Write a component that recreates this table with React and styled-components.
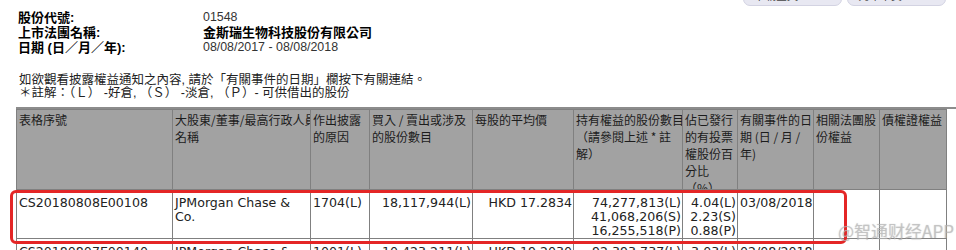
import React from "react";
import styled, { createGlobalStyle } from "styled-components";

const GlobalStyle = createGlobalStyle`
  html, body {
    margin: 0;
    padding: 0;
    background: #ffffff;
    overflow: hidden;
  }
`;

// page and top area

const Page = styled.div`
  position: relative;
  width: 956px;
  height: 250px;
  overflow: hidden;
  padding: 0 10px 0 16px;
  box-sizing: border-box;
`;

const Toolbar = styled.div`
  display: flex;
  justify-content: flex-end;
  align-items: flex-end;
  gap: 5px;
  height: 6px;
`;

const ToolButton = styled.div`
  flex: none;
  display: flex;
  align-items: flex-end;
  justify-content: space-between;
  width: 99px;
  height: 20px;
  box-sizing: border-box;
  padding: 0 12px 4px 10px;
  border: 1px solid #d3d3e2;
  border-radius: 7px;
  background: #e8e8f2;
  font-family: "Noto Sans CJK TC", sans-serif;
  font-size: 11px;
  color: #444;
  line-height: 11px;
`;

const Info = styled.div`
  display: grid;
  grid-template-columns: 185px 1fr;
  margin: 4px 0 0 2px;
  line-height: 15px;
  font-size: 13px;
`;

const Label = styled.div`
  font-family: "Liberation Sans", "Noto Sans CJK TC", sans-serif;
  font-weight: bold;
  color: #000;
`;

const Value = styled.div`
  font-family: "Liberation Sans", "Noto Sans CJK TC", sans-serif;
  font-weight: ${(p) => (p.$bold ? "bold" : "normal")};
  font-size: ${(p) => (p.$bold ? "13px" : "12.4px")};
  color: ${(p) => (p.$bold ? "#000" : "#333")};
`;

const Notes = styled.div`
  margin: 19px 0 0 3px;
  font-family: "Liberation Sans", "Noto Sans CJK TC", sans-serif;
  font-size: 12.5px;
  line-height: 13px;
  color: #222;
`;

const Rule = styled.div`
  height: 2px;
  margin: 7px -10px 0 0;
  background: #8c8c8c;
`;

// table

const Table = styled.table`
  border-collapse: collapse;
  table-layout: fixed;
  width: 931px;
  font-size: 12.6px;
`;

const HeadCell = styled.th`
  padding: 0;
  vertical-align: top;
  text-align: left;
  font-weight: normal;
  background: #a2a2a2;
  border: 1px solid #808080;
`;

const HeadText = styled.div`
  height: 79px;
  padding: 1px 2px 0;
  box-sizing: border-box;
  overflow: hidden;
  white-space: nowrap;
  font-family: "Noto Sans CJK TC", sans-serif;
  font-size: 12px;
  line-height: 17px;
  color: #1c1c1c;
`;

const Cell = styled.td`
  padding: 0;
  vertical-align: top;
  border: 1px solid #808080;
`;

const CellText = styled.div`
  height: 48px;
  padding: 6px ${(p) => (p.$right ? "1px" : "2px")} 0;
  box-sizing: border-box;
  overflow: hidden;
  text-align: ${(p) => (p.$right ? "right" : "left")};
  font-family: "DejaVu Sans", Verdana, sans-serif;
  font-size: 12.6px;
  line-height: 14px;
  color: #222;
`;

// overlays

const Highlight = styled.div`
  position: absolute;
  left: 10px;
  top: 190px;
  width: 837px;
  height: 54px;
  box-sizing: border-box;
  border: 3px solid #e42626;
  border-radius: 6px;
`;

const Watermark = styled.div`
  position: absolute;
  left: 838px;
  top: 220px;
  font-family: "Noto Sans CJK SC", sans-serif;
  font-size: 17px;
  line-height: 22px;
  white-space: nowrap;
  color: rgba(190, 190, 190, 0.6);
  text-shadow: 0 0 1px rgba(140, 140, 140, 0.5);
`;

const widths = [156, 138, 59, 103, 101, 109, 55, 76, 66, 67];

const headers = [
  ["表格序號"],
  ["大股東/董事/最高行政人員", "名稱"],
  ["作出披露", "的原因"],
  ["買入 / 賣出或涉及", "的股份數目"],
  ["每股的平均價"],
  ["持有權益的股份數目", "（請參閱上述 * 註", "解）"],
  ["佔已發行", "的有投票", "權股份百", "分比", "（%）"],
  ["有關事件的日", "期 (日 / 月 /", "年)"],
  ["相關法團股", "份權益"],
  ["債權證權益"],
];

const rows = [
  [
    ["CS20180808E00108"],
    ["JPMorgan Chase & Co."],
    ["1704(L)"],
    ["18,117,944(L)"],
    ["HKD 17.2834"],
    ["74,277,813(L)", "41,068,206(S)", "16,255,518(P)"],
    ["4.04(L)", "2.23(S)", "0.88(P)"],
    ["03/08/2018"],
    [],
    [],
  ],
  [
    ["CS20180807E00140"],
    ["JPMorgan Chase & Co."],
    ["1001(L)"],
    ["10,423,211(L)"],
    ["HKD 19.2030"],
    ["92,393,737(L)", "46,108,512(S)", "18,092,300(P)"],
    ["3.03(L)", "1.51(S)", "0.59(P)"],
    ["02/08/2018"],
    [],
    [],
  ],
];

const rightCols = [3, 4, 5, 6];

const Lines = ({ lines }) =>
  lines.map((l, i) => (
    <React.Fragment key={i}>
      {i > 0 && <br />}
      {l}
    </React.Fragment>
  ));

const App = () => (
  <>
    <GlobalStyle />
    <Page>
      <Toolbar>
        <ToolButton>
          <span>下載全文</span>
          <span>▭</span>
        </ToolButton>
        <ToolButton>
          <span>列印本頁</span>
          <span>▬</span>
        </ToolButton>
      </Toolbar>

      <Info>
        <Label>股份代號:</Label>
        <Value>01548</Value>
        <Label>上市法團名稱:</Label>
        <Value $bold>金斯瑞生物科技股份有限公司</Value>
        <Label>日期 (日／月／年):</Label>
        <Value>08/08/2017 - 08/08/2018</Value>
      </Info>

      <Notes>
        如欲觀看披露權益通知之內容, 請於「有關事件的日期」欄按下有關連結。
        <br />
        ＊註解：（Ｌ） -好倉, （Ｓ） -淡倉, （Ｐ）- 可供借出的股份
      </Notes>

      <Rule />

      <Table>
        <colgroup>
          {widths.map((w, i) => (
            <col key={i} style={{ width: w }} />
          ))}
        </colgroup>
        <thead>
          <tr>
            {headers.map((h, i) => (
              <HeadCell key={i}>
                <HeadText>
                  <Lines lines={h} />
                </HeadText>
              </HeadCell>
            ))}
          </tr>
        </thead>
        <tbody>
          {rows.map((r, ri) => (
            <tr key={ri}>
              {r.map((c, ci) => (
                <Cell key={ci}>
                  <CellText $right={rightCols.includes(ci)}>
                    <Lines lines={c} />
                  </CellText>
                </Cell>
              ))}
            </tr>
          ))}
        </tbody>
      </Table>

      <Highlight />
      <Watermark>@智通财经APP</Watermark>
    </Page>
  </>
);

export default App;
